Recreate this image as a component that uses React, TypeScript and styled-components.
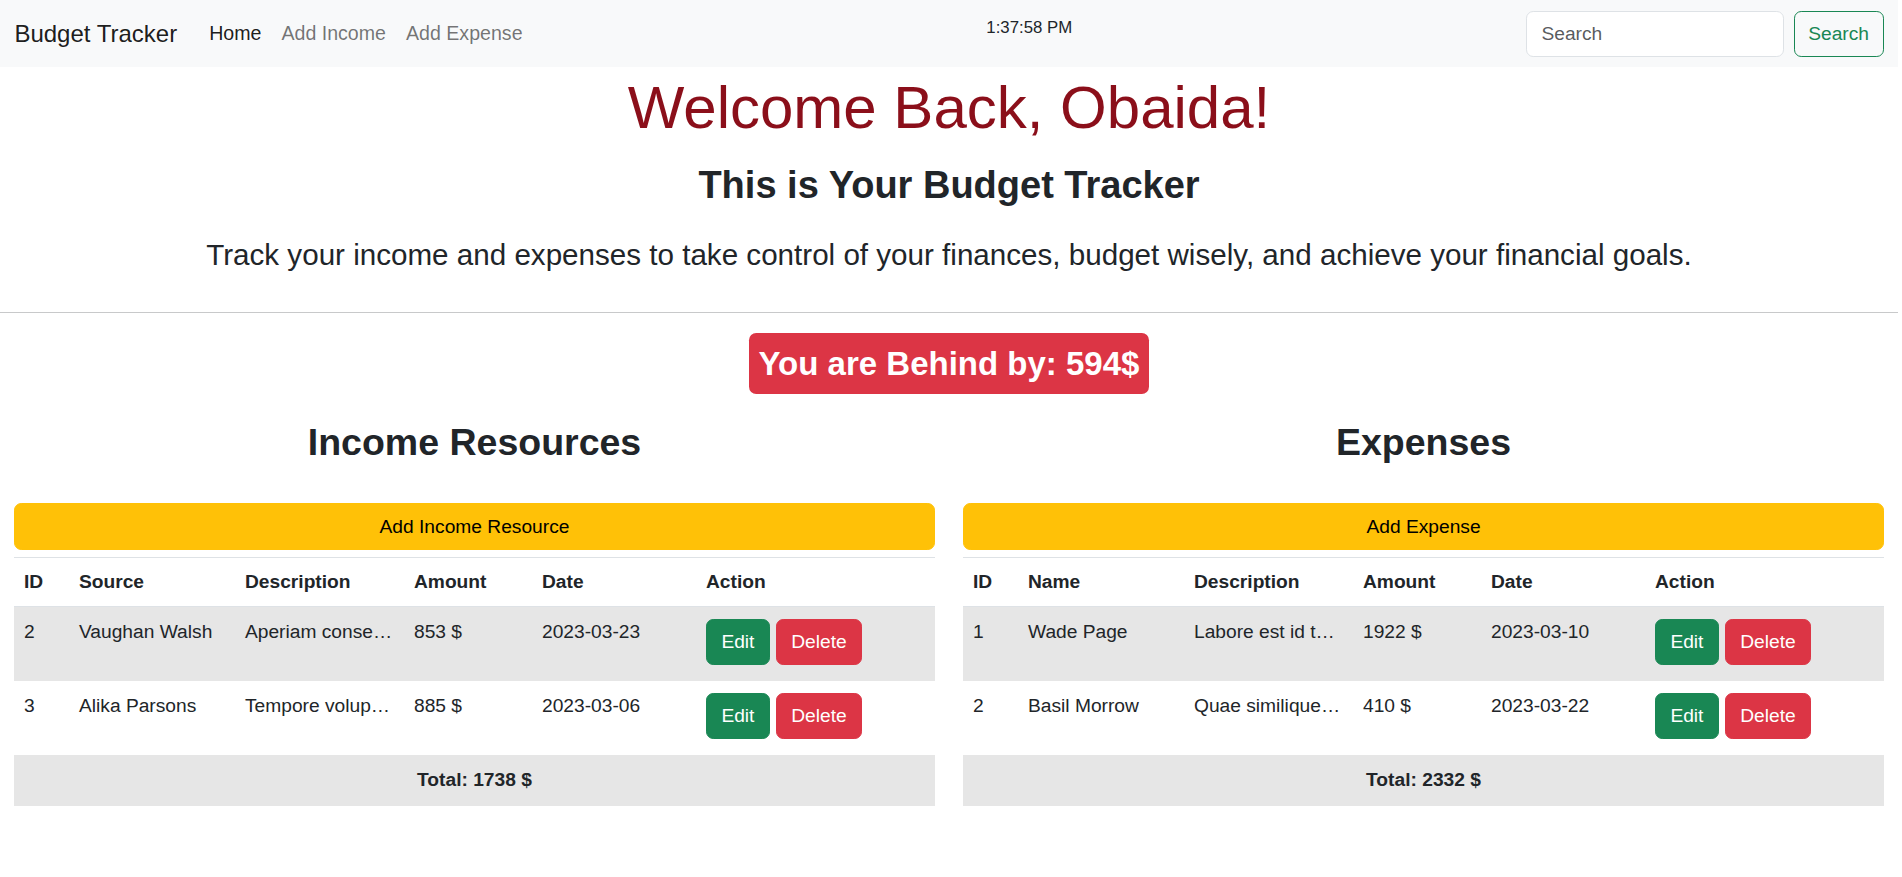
import styled, { createGlobalStyle } from 'styled-components';

type Entry = {
	id: number;
	name: string;
	description: string;
	amount: number;
	date: string;
};

// descriptions are shown already shortened, as the list page does
const incomes: Entry[] = [
	{ id: 2, name: 'Vaughan Walsh', description: 'Aperiam conse…', amount: 853, date: '2023-03-23' },
	{ id: 3, name: 'Alika Parsons', description: 'Tempore volup…', amount: 885, date: '2023-03-06' },
];

const expenses: Entry[] = [
	{ id: 1, name: 'Wade Page', description: 'Labore est id t…', amount: 1922, date: '2023-03-10' },
	{ id: 2, name: 'Basil Morrow', description: 'Quae similique…', amount: 410, date: '2023-03-22' },
];

const GlobalStyle = createGlobalStyle`
	html, body {
		margin: 0;
		padding: 0;
		background: #ffffff;
	}
	body {
		font-family: 'Liberation Sans', Arial, sans-serif;
		font-size: 19.2px;
		line-height: 1.5;
		color: #212529;
	}
	* {
		box-sizing: border-box;
	}
`;

type TableProps = {
	title: string;
	addLabel: string;
	nameLabel: string;
	rows: Entry[];
};

function BudgetTable({ title, addLabel, nameLabel, rows }: TableProps) {
	const total = rows.reduce((sum, row) => sum + row.amount, 0);

	return (
		<Section>
			<SectionTitle>{title}</SectionTitle>
			<AddButton type="button">{addLabel}</AddButton>
			<Table>
				<colgroup>
					<col style={{ width: 55 }} />
					<col style={{ width: 166 }} />
					<col style={{ width: 169 }} />
					<col style={{ width: 128 }} />
					<col style={{ width: 164 }} />
					<col />
				</colgroup>
				<thead>
					<tr>
						<HeadCell>ID</HeadCell>
						<HeadCell>{nameLabel}</HeadCell>
						<HeadCell>Description</HeadCell>
						<HeadCell>Amount</HeadCell>
						<HeadCell>Date</HeadCell>
						<HeadCell>Action</HeadCell>
					</tr>
				</thead>
				<tbody>
					{rows.map((row, index) => (
						<Row key={row.id} $shaded={index % 2 === 0}>
							<Cell>{row.id}</Cell>
							<Cell>{row.name}</Cell>
							<Cell>{row.description}</Cell>
							<Cell>{row.amount} $</Cell>
							<Cell>{row.date}</Cell>
							<ActionCell>
								<Actions>
									<ActionButton type="button" $variant="edit">
										Edit
									</ActionButton>
									<ActionButton type="button" $variant="delete">
										Delete
									</ActionButton>
								</Actions>
							</ActionCell>
						</Row>
					))}
				</tbody>
				<tfoot>
					<tr>
						<TotalCell colSpan={6}>Total: {total} $</TotalCell>
					</tr>
				</tfoot>
			</Table>
		</Section>
	);
}

export default function App() {
	const incomeTotal = incomes.reduce((sum, row) => sum + row.amount, 0);
	const expenseTotal = expenses.reduce((sum, row) => sum + row.amount, 0);
	const difference = expenseTotal - incomeTotal;

	return (
		<>
			<GlobalStyle />
			<Page>
				<Navbar>
					<Brand href="#">Budget Tracker</Brand>
					<NavList>
						<li>
							<NavLink href="#" $active>
								Home
							</NavLink>
						</li>
						<li>
							<NavLink href="#">Add Income</NavLink>
						</li>
						<li>
							<NavLink href="#">Add Expense</NavLink>
						</li>
					</NavList>
					<Clock>1:37:58 PM</Clock>
					<SearchForm onSubmit={(e) => e.preventDefault()}>
						<SearchInput type="search" placeholder="Search" aria-label="Search" />
						<SearchButton type="submit">Search</SearchButton>
					</SearchForm>
				</Navbar>

				<Hero>
					<Welcome>Welcome Back, Obaida!</Welcome>
					<Subtitle>This is Your Budget Tracker</Subtitle>
					<Lead>
						Track your income and expenses to take control of your finances, budget wisely, and
						achieve your financial goals.
					</Lead>
				</Hero>

				<Divider />

				<Summary>
					<Badge>You are Behind by: {difference}$</Badge>
				</Summary>

				<Columns>
					<BudgetTable
						title="Income Resources"
						addLabel="Add Income Resource"
						nameLabel="Source"
						rows={incomes}
					/>
					<BudgetTable title="Expenses" addLabel="Add Expense" nameLabel="Name" rows={expenses} />
				</Columns>
			</Page>
		</>
	);
}

const Page = styled.div`
	width: calc(100% - 4px);
	min-height: 100vh;
	background: #ffffff;
`;

const Navbar = styled.nav`
	display: flex;
	align-items: center;
	height: 67px;
	padding: 0 14.4px;
	background-color: #f8f9fa;
`;

const Brand = styled.a`
	margin-right: 22px;
	font-size: 24px;
	line-height: 36px;
	color: rgba(0, 0, 0, 0.9);
	text-decoration: none;
`;

const NavList = styled.ul`
	display: flex;
	margin: 0;
	padding: 0;
	list-style: none;
`;

const NavLink = styled.a<{ $active?: boolean }>`
	display: block;
	padding: 0 10px;
	font-size: 19.6px;
	line-height: 28.8px;
	color: ${({ $active }) => ($active ? 'rgba(0, 0, 0, 0.9)' : 'rgba(0, 0, 0, 0.55)')};
	text-decoration: none;
`;

const Clock = styled.div`
	flex: 1;
	align-self: flex-start;
	margin-top: 15px;
	font-size: 16.8px;
	line-height: 25px;
	text-align: center;
`;

const SearchForm = styled.form`
	display: flex;
	gap: 9.6px;
`;

const SearchInput = styled.input`
	width: 258px;
	height: 46px;
	padding: 0 14.4px;
	font-family: inherit;
	font-size: 19.2px;
	color: #212529;
	background: #ffffff;
	border: 1px solid #dee2e6;
	border-radius: 7.2px;
	outline: none;
	appearance: none;

	&::placeholder {
		color: rgba(33, 37, 41, 0.75);
	}
`;

const SearchButton = styled.button`
	width: 90px;
	height: 46px;
	padding: 0;
	font-family: inherit;
	font-size: 19.2px;
	color: #198754;
	background: transparent;
	border: 1px solid #198754;
	border-radius: 7.2px;
`;

const Hero = styled.header`
	text-align: center;
`;

const Welcome = styled.h1`
	margin: 5px 0 0;
	font-size: 60px;
	font-weight: 400;
	line-height: 72px;
	color: #8b0f1a;
`;

const Subtitle = styled.h2`
	margin: 18px 0 0;
	font-size: 38px;
	font-weight: 700;
	line-height: 47px;
`;

const Lead = styled.p`
	margin: 23px 0 0;
	font-size: 29.6px;
	font-weight: 400;
	line-height: 45px;
`;

const Divider = styled.hr`
	margin: 35px 0 20px;
	border: 0;
	border-top: 1px solid #c8c9ca;
`;

const Summary = styled.div`
	text-align: center;
`;

const Badge = styled.span`
	display: inline-block;
	padding: 10px 9.6px;
	font-size: 33px;
	font-weight: 700;
	line-height: 41px;
	color: #ffffff;
	background-color: #dc3545;
	border-radius: 7.2px;
`;

const Columns = styled.main`
	display: grid;
	grid-template-columns: 1fr 1fr;
	column-gap: 28.8px;
	padding: 0 14.4px;
`;

const Section = styled.section`
	display: flex;
	flex-direction: column;
	min-width: 0;
`;

const SectionTitle = styled.h2`
	margin: 26px 0 0;
	font-size: 37.5px;
	font-weight: 700;
	line-height: 45px;
	text-align: center;
`;

const AddButton = styled.button`
	height: 47px;
	margin-top: 38px;
	font-family: inherit;
	font-size: 19.2px;
	color: #000000;
	background-color: #ffc107;
	border: 1px solid #ffc107;
	border-radius: 7.2px;
`;

const Table = styled.table`
	width: 100%;
	margin-top: 7px;
	table-layout: fixed;
	border-collapse: collapse;
	border-top: 1px solid #dee2e6;
`;

const HeadCell = styled.th`
	padding: 9.6px;
	font-weight: 700;
	line-height: 28.8px;
	text-align: left;
	vertical-align: top;
	border-bottom: 1px solid #dee2e6;
`;

const Row = styled.tr<{ $shaded: boolean }>`
	background-color: ${({ $shaded }) => ($shaded ? '#e6e6e6' : '#ffffff')};
`;

const Cell = styled.td`
	padding: 11px 9.6px 9.6px;
	line-height: 28.8px;
	vertical-align: top;
	white-space: nowrap;
`;

const ActionCell = styled.td`
	padding: 12px 9.6px 16px;
	vertical-align: top;
`;

const Actions = styled.div`
	display: flex;
	gap: 6px;
`;

const ActionButton = styled.button<{ $variant: 'edit' | 'delete' }>`
	height: 46px;
	padding: 0 14.4px;
	font-family: inherit;
	font-size: 19.2px;
	color: #ffffff;
	background-color: ${({ $variant }) => ($variant === 'edit' ? '#198754' : '#dc3545')};
	border: 1px solid ${({ $variant }) => ($variant === 'edit' ? '#198754' : '#dc3545')};
	border-radius: 7.2px;
`;

const TotalCell = styled.td`
	padding: 11px 9.6px;
	font-weight: 700;
	line-height: 28.8px;
	text-align: center;
	background-color: #e6e6e6;
`;
